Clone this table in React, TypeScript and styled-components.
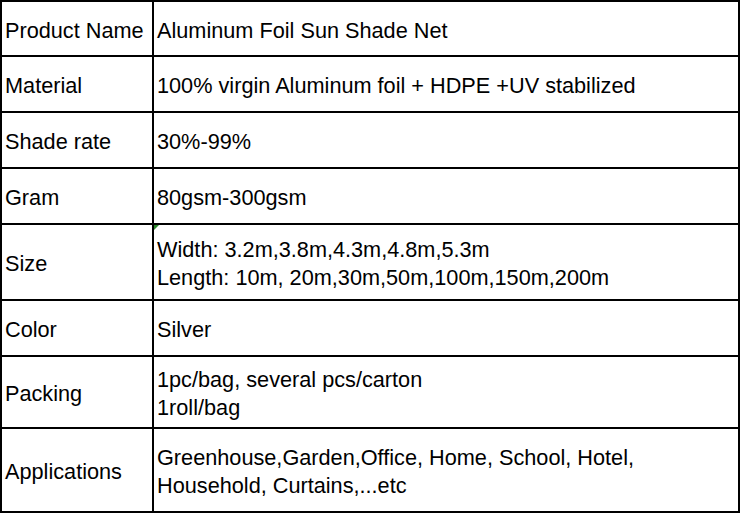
import React from "react";
import styled, {createGlobalStyle} from "styled-components";

const GlobalStyle = createGlobalStyle`
    html, body {
        margin: 0;
        padding: 0;
        background: #ffffff;
    }
`;

const Sheet = styled.div`
    display: grid;
    grid-template-columns: 150px 584px;
    grid-template-rows: 53px 54px 54px 54px 74px 54px 70px 82px;
    gap: 2px;
    padding: 2px;
    width: 740px;
    box-sizing: border-box;
    background: #000000;
    font-family: "Liberation Sans", Arial, sans-serif;
    font-size: 21.7px;
    line-height: 27.8px;
    color: #000000;
`;

const Cell = styled.div`
    position: relative;
    display: flex;
    flex-direction: column;
    justify-content: center;
    align-items: flex-start;
    padding: 4px 0 0 3px;
    background: #ffffff;
    white-space: nowrap;
`;

const Line = styled.span`
    display: block;
`;

const ErrorMark = styled.span`
    position: absolute;
    top: 0;
    left: 0;
    width: 0;
    height: 0;
    border-top: 5px solid #2e8b2e;
    border-right: 5px solid transparent;
`;

interface SpecRow {
    label: string;
    lines: string[];
    flagged?: boolean;
}

const rows: SpecRow[] = [
    {label: "Product Name", lines: ["Aluminum Foil Sun Shade Net"]},
    {label: "Material", lines: ["100% virgin Aluminum foil + HDPE +UV stabilized"]},
    {label: "Shade rate", lines: ["30%-99%"]},
    {label: "Gram", lines: ["80gsm-300gsm"]},
    {
        label: "Size",
        lines: ["Width: 3.2m,3.8m,4.3m,4.8m,5.3m", "Length: 10m, 20m,30m,50m,100m,150m,200m"],
        flagged: true,
    },
    {label: "Color", lines: ["Silver"]},
    {label: "Packing", lines: ["1pc/bag, several pcs/carton", "1roll/bag"]},
    {
        label: "Applications",
        lines: ["Greenhouse,Garden,Office, Home, School, Hotel,", "Household, Curtains,...etc"],
    },
];

const App: React.FC = () => {
    return (
        <>
            <GlobalStyle/>
            <Sheet>
                {rows.map((row) => (
                    <React.Fragment key={row.label}>
                        <Cell>{row.label}</Cell>
                        <Cell>
                            {row.flagged && <ErrorMark/>}
                            {row.lines.map((line) => (
                                <Line key={line}>{line}</Line>
                            ))}
                        </Cell>
                    </React.Fragment>
                ))}
            </Sheet>
        </>
    );
};

export default App;
